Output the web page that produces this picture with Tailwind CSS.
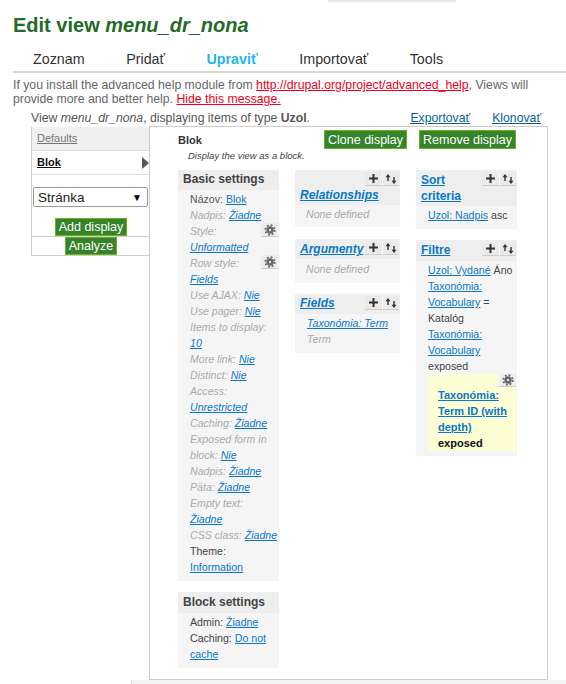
<!DOCTYPE html>
<html lang="sk">
<head>
  <meta charset="UTF-8" />
  <title>Edit view menu_dr_nona</title>
  <script src="https://cdn.jsdelivr.net/npm/@tailwindcss/browser@4"></script>
</head>
<body class="bg-white font-['Liberation_Sans',Arial,sans-serif] text-[12.25px] text-[#555] w-[566px] h-[684px] overflow-hidden relative">
  <div class="absolute top-0 left-[328px] w-[128px] h-[2px] rounded-b-full bg-[#e8e8e8]"></div>

  <h1 class="pl-[13px] pt-[13px] h-[47px] text-[20px] leading-[24px] font-bold text-[#236b27]">Edit view <em>menu_dr_nona</em></h1>

  <!-- tabs -->
  <nav class="ml-[13px] h-[26px] border-b-2 border-[#dcdad0] pl-[20px] flex gap-[41.5px] text-[14.3px] leading-[24px] text-[#333]">
    <a>Zoznam</a>
    <a>Pridať</a>
    <a class="font-bold text-[#1fb5ee]">Upraviť</a>
    <a>Importovať</a>
    <a>Tools</a>
  </nav>

  <p class="pl-[13px] pr-[30px] pt-[5px] leading-[14px] text-[#666]">If you install the advanced help module from <a class="text-[#ee0022] underline">http://drupal.org/project/advanced_help</a>, Views will provide more and better help. <a class="text-[#ee0022] underline">Hide this message.</a></p>

  <div class="flex justify-between pl-[31px] pr-[25px] pt-[4px] leading-[16px] h-[21px] text-[#555]">
    <span>View <em>menu_dr_nona</em>, displaying items of type <strong>Uzol</strong>.</span>
    <span class="flex gap-[22px] text-[#0a5f94] underline"><a>Exportovať</a><a>Klonovať</a></span>
  </div>

  <div class="flex ml-[31px] items-start">
    <!-- display tabs -->
    <aside class="w-[119px] shrink-0 border-l border-[#ccc] text-[11px] leading-[23px]">
      <a class="block h-[24px] bg-[#f0f0f0] border-b border-[#ddd] pl-[5px] text-[#777] underline">Defaults</a>
      <div class="flex justify-between items-center h-[24px] bg-white border-b border-[#ddd] pl-[5px] pr-[1px]">
        <a class="font-bold text-[#111] underline">Blok</a>
        <svg width="7" height="12" viewBox="0 0 7 12"><path d="M0 0L7 6L0 12Z" fill="#555"/></svg>
      </div>
      <div class="pt-[12px] pl-[1px] pr-[2px]">
        <div class="flex justify-between items-center h-[20px] bg-white border border-[#999] rounded-[2px] pl-[4px] pr-[5px] text-[13.5px] text-[#222]">Stránka<span class="text-[10px] text-black">▼</span></div>
      </div>
      <div class="flex justify-center pt-[11px] border-b border-[#ccc]">
        <button class="h-[18px] px-[3px] bg-[#35832a] border border-[#6fb11e] text-white text-[12.5px] leading-[14px]">Add display</button>
      </div>
      <div class="flex justify-center border-b border-[#ccc]">
        <button class="h-[18px] px-[3px] bg-[#35832a] border border-[#6fb11e] text-white text-[12.5px] leading-[14px]">Analyze</button>
      </div>
    </aside>

    <!-- main panel -->
    <main class="-ml-[1px] -mt-[1px] w-[399px] h-[554px] border border-[#ccc] pl-[28px] text-[10.6px] leading-[16px]">
      <div class="flex justify-end gap-[12px] pr-[31px] pt-[3px] h-[5px]">
        <button class="h-[19px] px-[3px] bg-[#35832a] border border-[#6fb11e] text-white text-[12.5px] leading-[14px]">Clone display</button>
        <button class="h-[19px] px-[3px] bg-[#35832a] border border-[#6fb11e] text-white text-[12.5px] leading-[14px]">Remove display</button>
      </div>
      <div class="font-bold text-[11px] text-[#333]">Blok</div>
      <div class="pl-[10px] pt-[1px] text-[9.5px] italic text-[#444] h-[22px] leading-[14px]">Display the view as a block.</div>

      <div class="flex items-start">
        <!-- column 1 -->
        <div class="w-[101px] mr-[16px] flex flex-col gap-[11px]">
          <section class="bg-[#f5f5f5]">
            <h3 class="h-[20px] bg-[#eeeeee] pl-[5px] font-bold text-[12px] leading-[19px] text-[#444]">Basic settings</h3>
            <div class="pl-[12px] pr-[2px] pt-[1px] pb-[6px] text-[#aaa]">
              <div class="text-[#555]">Názov: <a class="text-[#0a78c8] underline">Blok</a></div>
              <div class="italic">Nadpis: <a class="text-[#0a78c8] underline">Žiadne</a></div>
              <div class="italic"><span class="float-right -mr-[1px] w-[17px] h-[14px] bg-[#eee] border-b border-[#ccc] flex items-center justify-center"><svg width="12" height="12" viewBox="0 0 11 11"><circle cx="5.5" cy="5.5" r="3.4" fill="#666"/><circle cx="5.5" cy="5.5" r="1.1" fill="#ddd"/><circle cx="5.5" cy="5.5" r="4.4" fill="none" stroke="#666" stroke-width="1.6" stroke-dasharray="1.73 1.73"/></svg></span>Style: <a class="text-[#0a78c8] underline">Unformatted</a></div>
              <div class="italic"><span class="float-right -mr-[1px] w-[17px] h-[14px] bg-[#eee] border-b border-[#ccc] flex items-center justify-center"><svg width="12" height="12" viewBox="0 0 11 11"><circle cx="5.5" cy="5.5" r="3.4" fill="#666"/><circle cx="5.5" cy="5.5" r="1.1" fill="#ddd"/><circle cx="5.5" cy="5.5" r="4.4" fill="none" stroke="#666" stroke-width="1.6" stroke-dasharray="1.73 1.73"/></svg></span>Row style: <a class="text-[#0a78c8] underline">Fields</a></div>
              <div class="italic">Use AJAX: <a class="text-[#0a78c8] underline">Nie</a></div>
              <div class="italic">Use pager: <a class="text-[#0a78c8] underline">Nie</a></div>
              <div class="italic">Items to display: <a class="text-[#0a78c8] underline">10</a></div>
              <div class="italic">More link: <a class="text-[#0a78c8] underline">Nie</a></div>
              <div class="italic">Distinct: <a class="text-[#0a78c8] underline">Nie</a></div>
              <div class="italic">Access: <a class="text-[#0a78c8] underline">Unrestricted</a></div>
              <div class="italic">Caching: <a class="text-[#0a78c8] underline">Žiadne</a></div>
              <div class="italic">Exposed form in block: <a class="text-[#0a78c8] underline">Nie</a></div>
              <div class="italic">Nadpis: <a class="text-[#0a78c8] underline">Žiadne</a></div>
              <div class="italic">Päta: <a class="text-[#0a78c8] underline">Žiadne</a></div>
              <div class="italic">Empty text: <a class="text-[#0a78c8] underline">Žiadne</a></div>
              <div class="italic whitespace-nowrap">CSS class: <a class="text-[#0a78c8] underline">Žiadne</a></div>
              <div class="text-[#444]">Theme: <a class="text-[#0a78c8] underline">Information</a></div>
            </div>
          </section>
          <section class="bg-[#f5f5f5]">
            <h3 class="h-[21px] bg-[#eeeeee] pl-[5px] font-bold text-[12px] leading-[20px] text-[#444]">Block settings</h3>
            <div class="pl-[12px] pr-[2px] pt-[1px] pb-[6px] text-[#444]">
              <div>Admin: <a class="text-[#0a78c8] underline">Žiadne</a></div>
              <div>Caching: <a class="text-[#0a78c8] underline">Do not cache</a></div>
            </div>
          </section>
        </div>

        <!-- column 2 -->
        <div class="w-[105px] mr-[16px] flex flex-col">
          <section class="bg-[#f5f5f5]">
            <div class="bg-[#eeeeee] h-[35px] pl-[5px] pr-[1px] pt-[2px]">
              <span class="float-right flex">
                <span class="w-[17px] h-[14px] bg-[#eaeaea] border-b border-[#ccc] flex items-center justify-center"><svg width="9" height="9" viewBox="0 0 9 9"><path d="M4.5 0V9M0 4.5H9" stroke="#333" stroke-width="2"/></svg></span>
                <span class="w-[17px] h-[14px] bg-[#eaeaea] border-b border-l border-[#ccc] border-l-white flex items-center justify-center"><svg width="12" height="10" viewBox="0 0 12 10"><path d="M3 7V2M9 3V8" stroke="#333" stroke-width="1.4"/><path d="M.5 3.2L3 0L5.5 3.2ZM6.5 6.8L9 10L11.5 6.8Z" fill="#333"/></svg></span>
              </span>
              <a class="clear-both block pt-[1px] font-bold italic text-[12px] leading-[16px] text-[#0a78c8] underline">Relationships</a>
            </div>
            <div class="pl-[11px] pt-[1px] h-[22px] italic text-[#aaa]">None defined</div>
          </section>
          <section class="bg-[#f5f5f5] mt-[12px]">
            <div class="bg-[#eeeeee] h-[20px] pl-[5px] pr-[1px] pt-[2px]">
              <span class="float-right flex">
                <span class="w-[17px] h-[14px] bg-[#eaeaea] border-b border-[#ccc] flex items-center justify-center"><svg width="9" height="9" viewBox="0 0 9 9"><path d="M4.5 0V9M0 4.5H9" stroke="#333" stroke-width="2"/></svg></span>
                <span class="w-[17px] h-[14px] bg-[#eaeaea] border-b border-l border-[#ccc] border-l-white flex items-center justify-center"><svg width="12" height="10" viewBox="0 0 12 10"><path d="M3 7V2M9 3V8" stroke="#333" stroke-width="1.4"/><path d="M.5 3.2L3 0L5.5 3.2ZM6.5 6.8L9 10L11.5 6.8Z" fill="#333"/></svg></span>
              </span>
              <a class="font-bold italic text-[12px] leading-[16px] text-[#0a78c8] underline">Argumenty</a>
            </div>
            <div class="pl-[11px] pt-[2px] h-[24px] italic text-[#aaa]">None defined</div>
          </section>
          <section class="bg-[#f5f5f5] mt-[11px]">
            <div class="bg-[#eeeeee] h-[20px] pl-[5px] pr-[1px] pt-[1px]">
              <span class="float-right flex mt-[1px]">
                <span class="w-[17px] h-[14px] bg-[#eaeaea] border-b border-[#ccc] flex items-center justify-center"><svg width="9" height="9" viewBox="0 0 9 9"><path d="M4.5 0V9M0 4.5H9" stroke="#333" stroke-width="2"/></svg></span>
                <span class="w-[17px] h-[14px] bg-[#eaeaea] border-b border-l border-[#ccc] border-l-white flex items-center justify-center"><svg width="12" height="10" viewBox="0 0 12 10"><path d="M3 7V2M9 3V8" stroke="#333" stroke-width="1.4"/><path d="M.5 3.2L3 0L5.5 3.2ZM6.5 6.8L9 10L11.5 6.8Z" fill="#333"/></svg></span>
              </span>
              <a class="font-bold italic text-[12px] leading-[16px] text-[#0a78c8] underline">Fields</a>
            </div>
            <div class="pl-[12px] pt-[1px] pb-[6px] italic text-[#aaa]">
              <a class="block text-[#0a78c8] underline">Taxonómia: Term</a>
              Term
            </div>
          </section>
        </div>

        <!-- column 3 -->
        <div class="w-[101px] flex flex-col gap-[11px]">
          <section class="bg-[#f5f5f5]">
            <div class="bg-[#eeeeee] h-[36px] pl-[5px] pr-[1px] pt-[2px]">
              <span class="float-right flex">
                <span class="w-[17px] h-[14px] bg-[#eaeaea] border-b border-[#ccc] flex items-center justify-center"><svg width="9" height="9" viewBox="0 0 9 9"><path d="M4.5 0V9M0 4.5H9" stroke="#333" stroke-width="2"/></svg></span>
                <span class="w-[17px] h-[14px] bg-[#eaeaea] border-b border-l border-[#ccc] border-l-white flex items-center justify-center"><svg width="12" height="10" viewBox="0 0 12 10"><path d="M3 7V2M9 3V8" stroke="#333" stroke-width="1.4"/><path d="M.5 3.2L3 0L5.5 3.2ZM6.5 6.8L9 10L11.5 6.8Z" fill="#333"/></svg></span>
              </span>
              <a class="font-bold text-[12px] leading-[16px] text-[#0a78c8] underline">Sort criteria</a>
            </div>
            <div class="pl-[12px] pt-[1px] pb-[6px] text-[#444]"><a class="text-[#0a78c8] underline">Uzol: Nadpis</a> asc</div>
          </section>
          <section class="bg-[#f5f5f5]">
            <div class="bg-[#eeeeee] h-[21px] pl-[5px] pr-[1px] pt-[2px]">
              <span class="float-right flex">
                <span class="w-[17px] h-[14px] bg-[#eaeaea] border-b border-[#ccc] flex items-center justify-center"><svg width="9" height="9" viewBox="0 0 9 9"><path d="M4.5 0V9M0 4.5H9" stroke="#333" stroke-width="2"/></svg></span>
                <span class="w-[17px] h-[14px] bg-[#eaeaea] border-b border-l border-[#ccc] border-l-white flex items-center justify-center"><svg width="12" height="10" viewBox="0 0 12 10"><path d="M3 7V2M9 3V8" stroke="#333" stroke-width="1.4"/><path d="M.5 3.2L3 0L5.5 3.2ZM6.5 6.8L9 10L11.5 6.8Z" fill="#333"/></svg></span>
              </span>
              <a class="font-bold text-[12px] leading-[16px] text-[#0a78c8] underline">Filtre</a>
            </div>
            <div class="pl-[12px] pr-[1px] pt-[1px] pb-[5px] text-[#444]">
              <div><a class="text-[#0a78c8] underline">Uzol: Vydané</a> Áno</div>
              <div><a class="text-[#0a78c8] underline">Taxonómia: Vocabulary</a> = Katalóg</div>
              <div><a class="text-[#0a78c8] underline">Taxonómia: Vocabulary</a> exposed</div>
              <div class="bg-[#fefed5] pl-[10px] font-bold text-[11px] text-[#111]">
                <span class="float-right w-[17px] h-[13px] bg-[#eee] border-b border-[#ccc] flex items-center justify-center"><svg width="12" height="12" viewBox="0 0 11 11"><circle cx="5.5" cy="5.5" r="3.4" fill="#666"/><circle cx="5.5" cy="5.5" r="1.1" fill="#ddd"/><circle cx="5.5" cy="5.5" r="4.4" fill="none" stroke="#666" stroke-width="1.6" stroke-dasharray="1.73 1.73"/></svg></span>
                <div class="clear-both"><a class="text-[#0a78c8] underline">Taxonómia: Term ID (with depth)</a></div>
                exposed
              </div>
            </div>
          </section>
        </div>
      </div>
    </main>
  </div>

  <div class="ml-[131px] h-[4px] bg-[#f3f3f3] border-l border-[#ddd]"></div>
</body>
</html>
